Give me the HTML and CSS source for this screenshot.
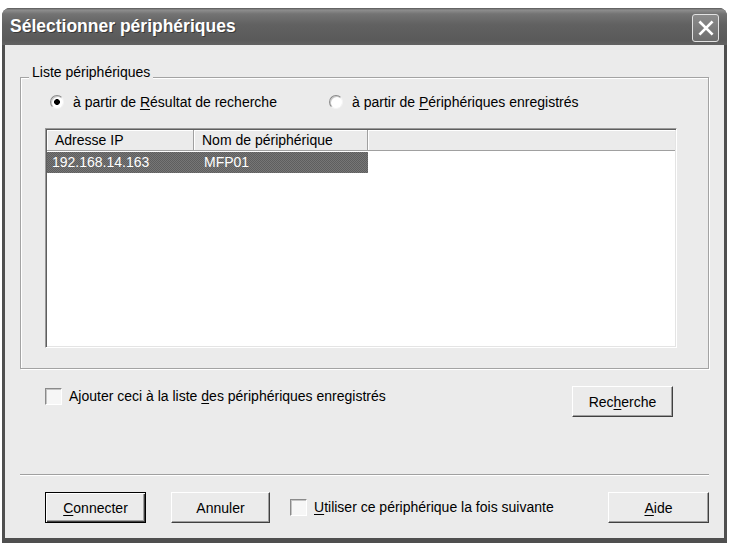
FILE: index.html
```html
<!DOCTYPE html>
<html>
<head>
  <meta charset="utf-8">
  <link rel="stylesheet" href="styles.css">
</head>
<body>
  <div class="window">
    <div class="titlebar">
      <span class="title">Sélectionner périphériques</span>
      <button class="close" title="Fermer">
        <svg viewBox="0 0 16 16" class="close-icon">
          <path d="M3 3L13 13M13 3L3 13"/>
        </svg>
      </button>
    </div>

    <div class="client">
      <div class="group">
        <span class="legend">Liste périphériques</span>
        <div class="radios">
          <label class="radio first"><span class="dot checked"></span><span>à partir de <u>R</u>ésultat de recherche</span></label>
          <label class="radio"><span class="dot"></span><span>à partir de <u>P</u>ériphériques enregistrés</span></label>
        </div>
        <div class="listview">
          <div class="lv-header">
            <div class="col col-ip">Adresse IP</div>
            <div class="col col-name">Nom de périphérique</div>
            <div class="col col-fill"></div>
          </div>
          <div class="lv-row selected">
            <span class="cell col-ip">192.168.14.163</span>
            <span class="cell col-name">MFP01</span>
          </div>
        </div>
      </div>

      <div class="search-row">
        <label class="check"><span class="box"></span><span>Ajouter ceci à la liste <u>d</u>es périphériques enregistrés</span></label>
        <button class="btn search">Rec<u>h</u>erche</button>
      </div>

      <div class="separator"></div>

      <div class="actions">
        <button class="btn default connect"><u>C</u>onnecter</button>
        <button class="btn cancel">Annuler</button>
        <label class="check next"><span class="box"></span><span><u>U</u>tiliser ce périphérique la fois suivante</span></label>
        <button class="btn help"><u>A</u>ide</button>
      </div>
    </div>
  </div>
</body>
</html>
```

FILE: styles.css
```css
* {
  box-sizing: border-box;
  margin: 0;
  padding: 0;
}

body {
  background: #ffffff;
  font-family: 'Liberation Sans', Arial, sans-serif;
  font-size: 14px;
  color: #000000;
}

u {
  text-decoration: underline;
  text-underline-offset: 2px;
}

.window {
  width: 725px;
  margin: 8px 0 0 2px;
  background: #4f4f4f;
  border-radius: 8px 8px 0 0;
  padding-bottom: 5px;
}

/* title bar */
.titlebar {
  height: 37px;
  display: flex;
  align-items: center;
  padding: 0 8px;
  border-radius: 8px 8px 0 0;
  background: linear-gradient(to bottom,
    #575757 0,
    #8e8e8e 2px,
    #737373 6px,
    #616161 45%,
    #5a5a5a 85%,
    #626262 100%);
}

.title {
  color: #ffffff;
  font-weight: bold;
  font-size: 17.5px;
  text-shadow: 1px 1px 0 #3a3a3a;
  margin-top: -1px;
}

.close {
  margin-left: auto;
  align-self: flex-start;
  margin-top: 6px;
  width: 27px;
  height: 28px;
  border: 1px solid #e2e2e2;
  border-radius: 3px;
  background: linear-gradient(to bottom, #8c8c8c, #6d6d6d);
  display: flex;
  align-items: center;
  justify-content: center;
}

.close-icon {
  width: 18px;
  height: 18px;
  stroke: #ffffff;
  stroke-width: 2.4;
  stroke-linecap: square;
  fill: none;
}

/* client area */
.client {
  margin: 0 3px;
  background: #ebebeb;
  padding: 32px 15px 15px 15px;
}

.group {
  position: relative;
  border: 1px solid #a3a3a3;
  box-shadow: inset 1px 1px 0 #ffffff, 1px 1px 0 #ffffff;
  padding: 16px 0 20px 24px;
}

.legend {
  position: absolute;
  top: -14px;
  left: 8px;
  padding: 0 3px;
  line-height: 16px;
  background: #ebebeb;
}

.radios {
  display: flex;
  height: 16px;
  margin-left: 5px;
  align-items: center;
}

.radio {
  display: flex;
  align-items: center;
  gap: 9px;
  line-height: 16px;
}

.radio.first {
  width: 279px;
}

.dot {
  width: 14px;
  height: 14px;
  border-radius: 50%;
  background: #ffffff;
  border: 1px solid;
  border-color: #8a8a8a #f4f4f4 #f4f4f4 #8a8a8a;
  box-shadow: inset 1px 1px 0 #c8c8c8;
}

.dot.checked {
  background: radial-gradient(circle, #000000 0 2.6px, #ffffff 3.2px);
}

/* list view */
.listview {
  margin-top: 18px;
  width: 632px;
  height: 220px;
  background: #ffffff;
  border: 1px solid;
  border-color: #9a9a9a #ffffff #ffffff #9a9a9a;
  box-shadow: inset 1px 1px 0 #5e5e5e, inset -1px -1px 0 #e4e4e4;
  padding: 1px;
}

.lv-header {
  display: flex;
  height: 21px;
  background: #ebebeb;
  border-bottom: 1px solid #a0a0a0;
}

.col {
  line-height: 20px;
  padding-left: 8px;
  border-right: 1px solid #a0a0a0;
  box-shadow: inset 1px 1px 0 #ffffff;
}

.col-ip {
  width: 147px;
}

.col-name {
  width: 174px;
}

.col-fill {
  flex: 1;
  border-right: none;
}

.lv-row {
  display: flex;
  height: 21px;
  width: 321px;
  margin-top: 1px;
  line-height: 21px;
}

.lv-row.selected {
  color: #ffffff;
  background: repeating-conic-gradient(#5e5e5e 0 25%, #767676 0 50%) 0 0 / 2px 2px;
}

.cell.col-ip {
  padding-left: 5px;
}

.cell.col-name {
  padding-left: 10px;
}

/* checkboxes */
.check {
  display: flex;
  align-items: center;
  gap: 7px;
  line-height: 17px;
}

.box {
  width: 17px;
  height: 17px;
  background: #f6f6f6;
  border: 1px solid;
  border-color: #8a8a8a #ffffff #ffffff #8a8a8a;
  box-shadow: inset 1px 1px 0 #c4c4c4;
}

.search-row {
  display: flex;
  align-items: flex-start;
  margin-top: 17px;
  height: 31px;
  padding-left: 25px;
}

.search-row .check {
  margin-top: 2px;
}

/* buttons */
.btn {
  height: 31px;
  font-family: 'Liberation Sans', Arial, sans-serif;
  font-size: 14px;
  color: #000000;
  background: #ebebeb;
  border: 1px solid;
  border-color: #ffffff #404040 #404040 #ffffff;
  box-shadow: inset -1px -1px 0 #a0a0a0;
}

.btn.default {
  border: 1px solid #000000;
  box-shadow: inset 1px 1px 0 #ffffff, inset -1px -1px 0 #404040, inset -2px -2px 0 #a0a0a0;
}

.search {
  margin-left: auto;
  margin-right: 36px;
  width: 101px;
}

.separator {
  margin-top: 57px;
  height: 2px;
  border-top: 1px solid #a0a0a0;
  border-bottom: 1px solid #ffffff;
}

.actions {
  display: flex;
  align-items: center;
  margin-top: 16px;
  height: 31px;
  padding-left: 25px;
}

.connect {
  width: 101px;
}

.cancel {
  width: 99px;
  margin-left: 25px;
}

.check.next {
  margin-left: 20px;
}

.help {
  width: 101px;
  margin-left: auto;
}
```
